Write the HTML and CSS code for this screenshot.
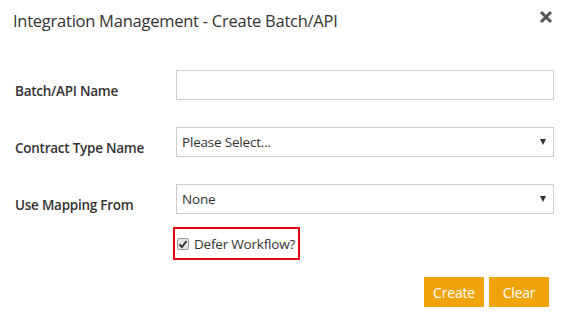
FILE: index.html
```html
<!DOCTYPE html>
<html>
<head>
<meta charset="utf-8">
<link rel="stylesheet" href="styles.css">
</head>
<body>
<div class="modal">
  <div class="header">
    <h1 class="title">Integration Management - Create Batch/API</h1>
    <span class="close">
      <svg width="14" height="14" viewBox="0 0 14 14"><path d="M2 2 L12 12 M12 2 L2 12" stroke="#555" stroke-width="3" stroke-linecap="butt"/></svg>
    </span>
  </div>
  <div class="form">
    <div class="row">
      <label class="label">Batch/API Name</label>
      <div class="control"><input class="input" type="text"></div>
    </div>
    <div class="row">
      <label class="label">Contract Type Name</label>
      <div class="control"><div class="select"><span>Please Select...</span><span class="caret"></span></div></div>
    </div>
    <div class="row">
      <label class="label">Use Mapping From</label>
      <div class="control"><div class="select"><span>None</span><span class="caret"></span></div></div>
    </div>
    <div class="check-row">
      <div class="highlight">
        <span class="cb">
          <svg width="10" height="10" viewBox="0 0 10 10"><path d="M1.5 5.5 L4 8 L8.5 2" stroke="#333" stroke-width="2" fill="none"/></svg>
        </span>
        <span class="cb-label">Defer Workflow?</span>
      </div>
    </div>
    <div class="actions">
      <button class="btn">Create</button>
      <button class="btn">Clear</button>
    </div>
  </div>
</div>
</body>
</html>
```
FILE: styles.css
```css
* { box-sizing: border-box; }
html, body { margin: 0; padding: 0; background: #fff; }
body { font-family: "Open Sans", "Noto Sans", sans-serif; color: #333; }
.modal { width: 562px; height: 313px; }
.header { display: flex; justify-content: space-between; align-items: flex-start; padding: 9px 9px 0 13px; height: 50px; }
.title { margin: 0; font-size: 16.5px; font-weight: 400; line-height: 24px; color: #333; letter-spacing: -0.25px; }
.close { display: block; width: 14px; height: 14px; margin-top: 1px; }
.close svg { display: block; }
.form { padding: 0 8px 0 15px; }
.row { display: grid; grid-template-columns: 161px 1fr; align-items: center; height: 57px; padding-top: 12px; }
.label { font-size: 13.5px; font-weight: 600; color: #333; letter-spacing: -0.25px; padding-top: 12px; }
.input { display: block; width: 100%; height: 30px; border: 1px solid #ccc; margin: 0; padding: 0 5px; font: inherit; }
.select { display: flex; align-items: center; justify-content: space-between; height: 30px; border: 1px solid #ccc; padding: 0 7px 0 5px; font-size: 13.5px; color: #333; letter-spacing: -0.2px; }
.caret { width: 0; height: 0; border-left: 3.5px solid transparent; border-right: 3.5px solid transparent; border-top: 6px solid #333; }
.check-row { padding-left: 158px; padding-top: 6px; }
.highlight { display: inline-flex; align-items: center; gap: 5px; border: 2px solid #e2000f; width: 127px; height: 33px; padding-left: 2px; }
.cb { display: flex; align-items: center; justify-content: center; width: 12px; height: 12px; border: 1px solid #999; border-radius: 2px; background: #e6e6e6; }
.cb svg { display: block; }
.cb-label { font-size: 13.5px; color: #333; letter-spacing: -0.2px; }
.actions { display: flex; justify-content: flex-end; gap: 5px; padding-top: 17px; padding-right: 5px; }
.btn { width: 60px; height: 30px; border: 0; background: #f0a30a; color: #fff; font-family: inherit; font-size: 14px; padding: 0; letter-spacing: -0.2px; }
```
